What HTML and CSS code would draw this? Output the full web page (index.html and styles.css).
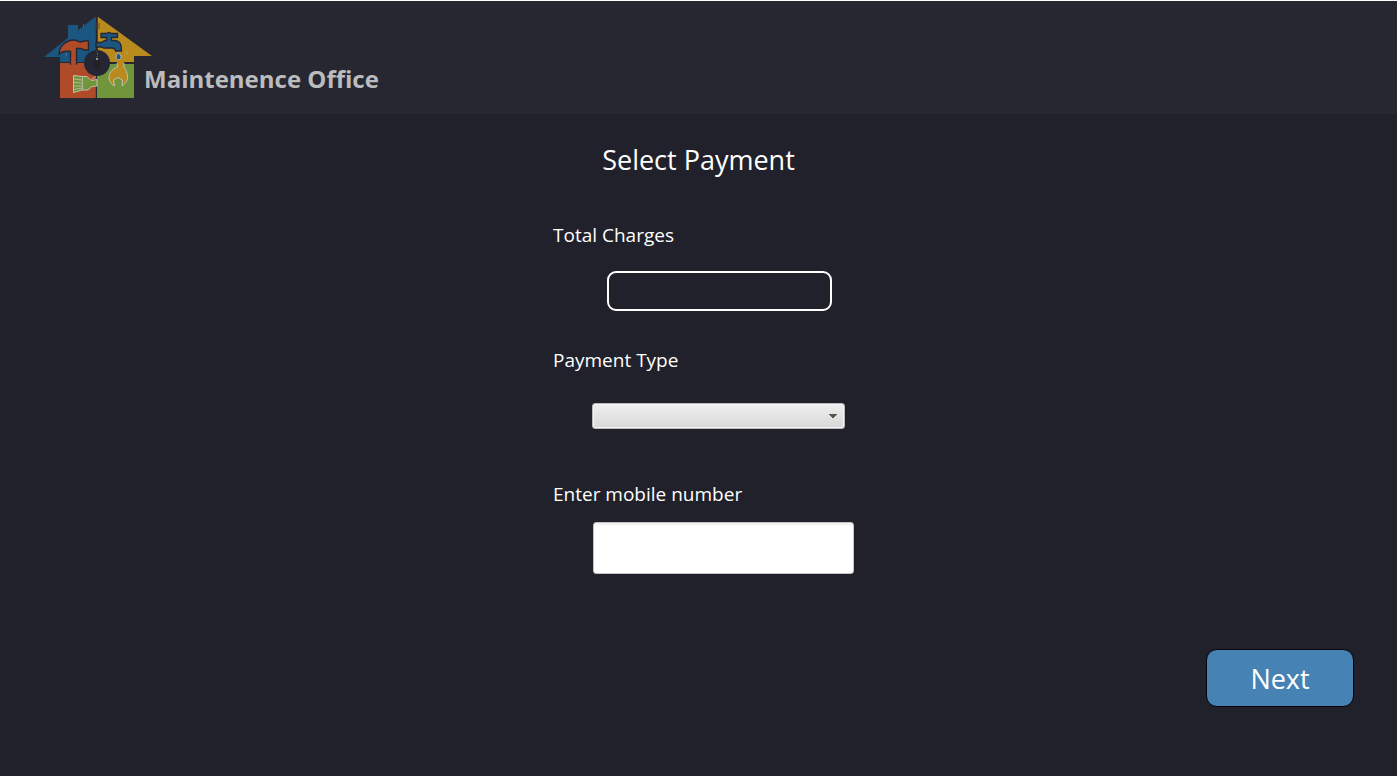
FILE: index.html
```html
<!DOCTYPE html>
<html lang="en">
<head>
<meta charset="utf-8">
<meta name="viewport" content="width=device-width, initial-scale=1">
<title>Maintenence Office</title>
<link rel="stylesheet" href="styles.css">
</head>
<body>
<header class="header">
  <svg class="logo" viewBox="44 14 109 86" aria-hidden="true">
    <path fill="#1a5680" d="M96 16.500V62H60V57H44L68 38V25H78V30Z"/>
    <path fill="#b98a1e" d="M97.500 16.500L152 56H134V62H97.500Z"/>
    <path fill="#af4b28" d="M60 63H96V98H60Z"/>
    <path fill="#71953a" d="M97 64H134V98H97Z"/>
    <path fill="#262731" d="M95.800 16H97.500V52H95.800ZM95.800 74H97V99H95.800Z"/>
    <path fill="#af4b28" stroke="#262731" stroke-width="1.400" d="M70.500 64V51.500C67 51 62 51 59 54C59.500 46 66 40 74 40C77 40 78.500 42 81 42L84 41H88.500V50H84L81 48.500H76.500V64Z"/>
    <path fill="#af4b28" d="M71.200 61H75.800V67H71.200Z"/>
    <path fill="none" stroke="#5a7f9a" stroke-width=".8" d="M65 55l2-2M66 56l1-1"/>
    <path fill="#1a5680" stroke="#262731" stroke-width="1.300" d="M96 42.500H101L105 40.500H106.500V37.500H101V33.500H106L109 32.500L112 33.500H117.500V37.500H111.500V40.500H115C120 41 121.500 44 121.500 51H115.500C115.500 48.500 114 48 111 48H104L101 47H96Z"/>
    <path fill="#1a5680" stroke="#b9b9b5" stroke-width=".9" d="M118.500 52.500C121 56 121.500 57 120.500 58.700C119.500 60 117.500 60 116.500 58.700C115.500 57 116.500 55 118.500 52.500Z"/>
    <path fill="#b98a1e" stroke="#c3c1b4" stroke-width="1" d="M117 63L117.500 67C111 70 109 73 109 78C109 81 111 84 114.500 86L113.500 80L118 77.500L122.500 80L122 86C126 83 128 80 127.500 76C127 71 125 69 124 67V63Z"/>
    <path fill="#b98a1e" d="M117.500 60H123.500V64H117.500Z"/>
    <path stroke="#d0a94f" stroke-width=".7" d="M125 53l2-2M126 55l2-2"/>
    <path fill="#71953a" stroke="#c3c1b4" stroke-width="1" d="M73.500 75.500L82 76.500L87 76.500L91 80.500L97 79.500V86L92 86.500L88 90H82L73.500 92.500Z"/>
    <path fill="none" stroke="#c3c1b4" stroke-width=".8" d="M82.500 76.500V90M74 79L82 80M74 82.500L82 83M74 86H82M74 89.500L82 88M91 79.500l5-3"/>
    <circle cx="97" cy="63" r="13" fill="#252633"/>
    <path fill="#242124" d="M97 58C101 61 102 65 100 68L97 70L94 68C92 65 93 61 97 58Z"/>
    <circle cx="97" cy="59" r="1" fill="#b8b8b8"/>
    <path fill="none" stroke="#777780" stroke-width=".7" d="M97 51v1M97.500 53v2M97 56v1"/>
    <path fill="#444339" opacity=".45" d="M94.500 23H100V29H94.500Z"/>
    <path fill="#8b8d90" d="M83 24.500h1v1h-1Z"/>
  </svg>
  <span class="brand">Maintenence Office</span>
</header>
<main class="main">
  <h1 class="title">Select Payment</h1>
  <form class="form">
    <label class="label" for="total">Total Charges</label>
    <input class="total" id="total" type="text" readonly>
    <label class="label" for="type">Payment Type</label>
    <select class="type" id="type"><option value=""></option></select>
    <label class="label" for="mobile">Enter mobile number</label>
    <input class="mobile" id="mobile" type="tel">
  </form>
  <button class="next" type="button">Next</button>
</main>
</body>
</html>
```
FILE: styles.css
```css
* {
  box-sizing: border-box;
}

body {
  margin: 0;
  min-height: 100vh;
  background: #21212b;
  color: #fff;
  font-family: "Open Sans", "Noto Sans", sans-serif;
}

.header {
  display: flex;
  align-items: flex-end;
  padding: 13px 44px 14px;
  background: #272731;
  border-top: 1px solid #fff;
}

.logo {
  width: 109px;
  height: 86px;
  margin-right: -9px;
}

.brand {
  font-size: 24px;
  line-height: 32px;
  font-weight: 700;
  color: #bcbcbe;
  padding-bottom: 5px;
}

.main {
  display: flex;
  flex-direction: column;
  align-items: center;
  padding: 28px 43px 24px;
}

.title {
  margin: 0 0 43px;
  font-size: 27px;
  line-height: 36px;
  font-weight: 400;
}

.form {
  display: flex;
  flex-direction: column;
  align-items: flex-start;
  width: 311px;
  max-width: 100%;
  padding-left: 10px;
}

.label {
  font-size: 19px;
  line-height: 28px;
}

.total,
.mobile {
  padding: 0 10px;
  font: inherit;
  font-size: 19px;
}

.total {
  width: 225px;
  height: 40px;
  margin: 22px 0 35px 54px;
  background: transparent;
  color: #fff;
  border: 2px solid #fff;
  border-radius: 9px;
}

.type {
  appearance: none;
  width: 253px;
  height: 26px;
  margin: 29px 0 51px 39px;
  border: 1px solid #b9b9b9;
  border-radius: 3px;
  background:
    linear-gradient(to bottom left, #555 50%, transparent 52%) right 11px top 10px / 4px 4px no-repeat,
    linear-gradient(to bottom right, #555 50%, transparent 52%) right 7px top 10px / 4px 4px no-repeat,
    linear-gradient(#efefef, #d8d8d8);
  box-shadow: inset 0 0 0 1px #f3f3f3;
}

.mobile {
  width: 261px;
  height: 52px;
  margin: 14px 0 75px 40px;
  background: linear-gradient(#efefef, #fff 4px);
  color: #222;
  border: 1px solid #c4c4c6;
  border-radius: 3px;
}

.next {
  align-self: flex-end;
  width: 148px;
  height: 58px;
  padding: 0;
  background: #4682b4;
  color: #fff;
  border: 1px solid #050508;
  border-radius: 11px;
  font: inherit;
  font-size: 27px;
}
```
